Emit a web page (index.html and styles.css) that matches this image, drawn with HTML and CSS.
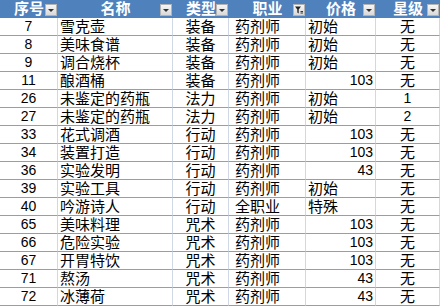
FILE: index.html
```html
<!DOCTYPE html>
<html lang="zh">
<head>
<meta charset="utf-8">
<link rel="stylesheet" href="styles.css">
</head>
<body>
<div class="sheet">
  <div class="hd">序号<span class="btn"><svg viewBox="0 0 10 10"><path d="M2 4h6L5 7z" fill="#333"/></svg></span></div>
  <div class="hd">名称<span class="btn"><svg viewBox="0 0 10 10"><path d="M2 4h6L5 7z" fill="#333"/></svg></span></div>
  <div class="hd">类型<span class="btn"><svg viewBox="0 0 10 10"><path d="M2 4h6L5 7z" fill="#333"/></svg></span></div>
  <div class="hd">职业<span class="btn"><svg viewBox="0 0 10 10"><path d="M1 1.5h6L4.7 4.5V8.5L3.3 7.5V4.5z" fill="#222"/><path d="M6.5 6.5h2.5M6.5 8h2.5" stroke="#222" stroke-width="0.9"/></svg></span></div>
  <div class="hd">价格<span class="btn"><svg viewBox="0 0 10 10"><path d="M2 4h6L5 7z" fill="#333"/></svg></span></div>
  <div class="hd">星级<span class="btn"><svg viewBox="0 0 10 10"><path d="M2 4h6L5 7z" fill="#333"/></svg></span></div>

  <div class="cell c num">7</div><div class="cell l">雪克壶</div><div class="cell c">装备</div><div class="cell p">药剂师</div><div class="cell l">初始</div><div class="cell c">无</div>
  <div class="cell c num">8</div><div class="cell l">美味食谱</div><div class="cell c">装备</div><div class="cell p">药剂师</div><div class="cell l">初始</div><div class="cell c">无</div>
  <div class="cell c num">9</div><div class="cell l">调合烧杯</div><div class="cell c">装备</div><div class="cell p">药剂师</div><div class="cell l">初始</div><div class="cell c">无</div>
  <div class="cell c num">11</div><div class="cell l">酿酒桶</div><div class="cell c">装备</div><div class="cell p">药剂师</div><div class="cell r num">103</div><div class="cell c">无</div>
  <div class="cell c num">26</div><div class="cell l">未鉴定的药瓶</div><div class="cell c">法力</div><div class="cell p">药剂师</div><div class="cell l">初始</div><div class="cell c num">1</div>
  <div class="cell c num">27</div><div class="cell l">未鉴定的药瓶</div><div class="cell c">法力</div><div class="cell p">药剂师</div><div class="cell l">初始</div><div class="cell c num">2</div>
  <div class="cell c num">33</div><div class="cell l">花式调酒</div><div class="cell c">行动</div><div class="cell p">药剂师</div><div class="cell r num">103</div><div class="cell c">无</div>
  <div class="cell c num">34</div><div class="cell l">装置打造</div><div class="cell c">行动</div><div class="cell p">药剂师</div><div class="cell r num">103</div><div class="cell c">无</div>
  <div class="cell c num">36</div><div class="cell l">实验发明</div><div class="cell c">行动</div><div class="cell p">药剂师</div><div class="cell r num">43</div><div class="cell c">无</div>
  <div class="cell c num">39</div><div class="cell l">实验工具</div><div class="cell c">行动</div><div class="cell p">药剂师</div><div class="cell l">初始</div><div class="cell c">无</div>
  <div class="cell c num">40</div><div class="cell l">吟游诗人</div><div class="cell c">行动</div><div class="cell p">全职业</div><div class="cell l">特殊</div><div class="cell c">无</div>
  <div class="cell c num">65</div><div class="cell l">美味料理</div><div class="cell c">咒术</div><div class="cell p">药剂师</div><div class="cell r num">103</div><div class="cell c">无</div>
  <div class="cell c num">66</div><div class="cell l">危险实验</div><div class="cell c">咒术</div><div class="cell p">药剂师</div><div class="cell r num">103</div><div class="cell c">无</div>
  <div class="cell c num">67</div><div class="cell l">开胃特饮</div><div class="cell c">咒术</div><div class="cell p">药剂师</div><div class="cell r num">103</div><div class="cell c">无</div>
  <div class="cell c num">71</div><div class="cell l">熬汤</div><div class="cell c">咒术</div><div class="cell p">药剂师</div><div class="cell r num">43</div><div class="cell c">无</div>
  <div class="cell c num">72</div><div class="cell l">冰薄荷</div><div class="cell c">咒术</div><div class="cell p">药剂师</div><div class="cell r num">43</div><div class="cell c">无</div>
</div>
</body>
</html>
```

FILE: styles.css
```css
html, body {
  margin: 0;
  padding: 0;
  background: #ffffff;
}
body {
  font-family: "Liberation Sans", "Noto Sans CJK SC", sans-serif;
  font-size: 15px;
  color: #000000;
}
.sheet {
  display: grid;
  grid-template-columns: 58px 115px 56px 77px 70px 64px;
  width: 440px;
}
.hd {
  position: relative;
  height: 18px;
  background: #4f81bd;
  color: #ffffff;
  font-weight: bold;
  font-size: 15px;
  line-height: 18px;
  display: flex;
  align-items: center;
  justify-content: center;
  white-space: nowrap;
}
.btn {
  position: absolute;
  right: 1px;
  top: 4px;
  width: 12px;
  height: 12px;
  box-sizing: border-box;
  border: 1px solid #b3b3b3;
  background: linear-gradient(#f6f6f6, #d9d9d9);
  display: flex;
}
.btn svg {
  width: 10px;
  height: 10px;
}
.cell {
  height: 18px;
  box-sizing: border-box;
  border-right: 1px solid #d0d7e5;
  border-bottom: 1px solid #7fa2cf;
  display: flex;
  align-items: center;
  line-height: 17px;
  white-space: nowrap;
  overflow: hidden;
}
.c {
  justify-content: center;
}
.l {
  padding-left: 2px;
}
.p {
  padding-left: 6px;
}
.r {
  justify-content: flex-end;
  padding-right: 2px;
}
.num {
  font-size: 14px;
}
```
